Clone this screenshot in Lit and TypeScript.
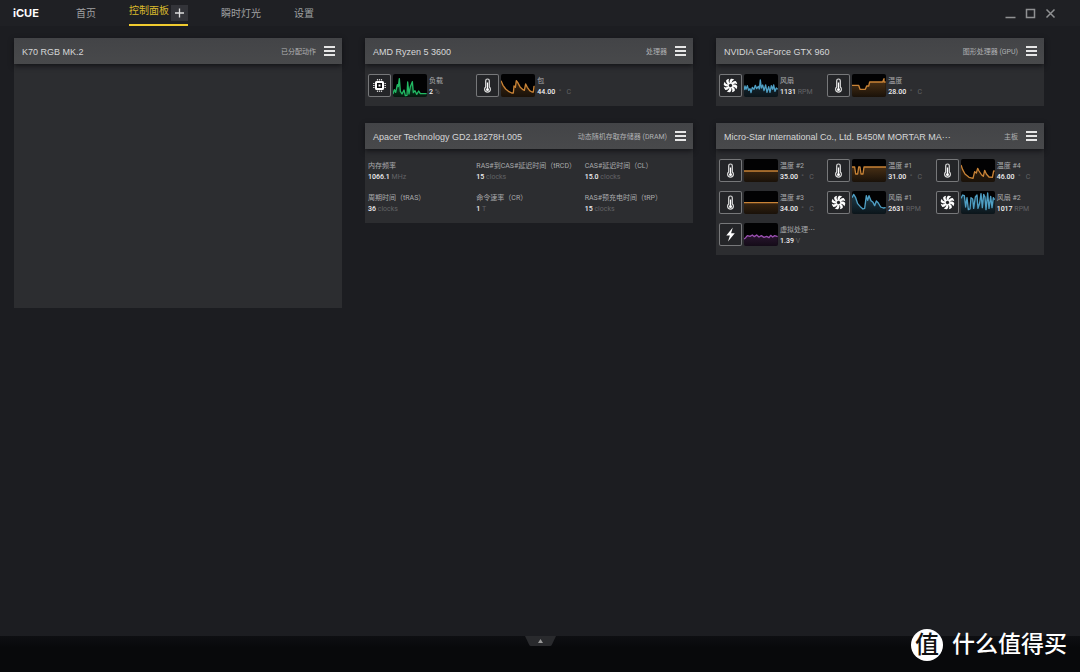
import { LitElement, html, svg, css, nothing } from "lit";
import { customElement, property } from "lit/decorators.js";

type IconName = "chip" | "temp" | "fan" | "bolt";

interface Sensor {
  icon?: IconName;
  color?: string;
  fill?: number;
  points?: string;
  label: string;
  value: string;
  unit: string;
}

interface Device {
  name: string;
  kind: string;
  sensors: Sensor[];
}

const GREEN = "#22b863";
const ORANGE = "#c98336";
const BLUE = "#4f9fc4";
const PURPLE = "#9a4fb0";

const COLUMNS: Device[][] = [
  [{ name: "K70 RGB MK.2", kind: "已分配动作", sensors: [] }],
  [
    {
      name: "AMD Ryzen 5 3600",
      kind: "处理器",
      sensors: [
        { icon: "chip", color: GREEN, fill: 0.45, label: "负载", value: "2", unit: "%",
          points: "0,60 4,47 8,55 13,32 16,38 19,14 22,52 27,60 33,48 37,65 42,64 44,24 48,60 52,38 58,23 61,56 66,50 71,61 77,51 82,59 101,59" },
        { icon: "temp", color: ORANGE, fill: 0.3, label: "包", value: "44.00", unit: " °   C",
          points: "0,20 6,34 14,45 24,53 32,57 37,57 39,36 43,40 46,20 50,25 58,40 66,47 70,49 74,30 79,40 86,50 93,54 97,54 99,37 101,37" },
      ],
    },
    {
      name: "Apacer Technology GD2.18278H.005",
      kind: "动态随机存取存储器 (DRAM)",
      sensors: [
        { label: "内存频率", value: "1066.1", unit: "MHz" },
        { label: "RAS#到CAS#延迟时间（tRCD）", value: "15", unit: "clocks" },
        { label: "CAS#延迟时间（CL）", value: "15.0", unit: "clocks" },
        { label: "周期时间（tRAS）", value: "36", unit: "clocks" },
        { label: "命令速率（CR）", value: "1", unit: "T" },
        { label: "RAS#预充电时间（tRP）", value: "15", unit: "clocks" },
      ],
    },
  ],
  [
    {
      name: "NVIDIA GeForce GTX 960",
      kind: "图形处理器 (GPU)",
      sensors: [
        { icon: "fan", color: BLUE, fill: 0.3, label: "风扇", value: "1131", unit: "RPM",
          points: "0,48 3,36 6,46 10,35 14,49 18,44 21,56 25,40 30,46 34,34 38,44 43,37 46,45 49,18 52,42 56,33 60,50 65,33 69,55 74,38 78,55 82,35 86,46 89,33 93,52 97,42 101,46" },
        { icon: "temp", color: ORANGE, fill: 0.4, label: "温度", value: "28.00", unit: " °   C",
          points: "0,34 20,34 24,46 40,46 44,36 50,36 53,24 92,24 96,14 96,24 101,24" },
      ],
    },
    {
      name: "Micro-Star International Co., Ltd. B450M MORTAR MA···",
      kind: "主板",
      sensors: [
        { icon: "temp", color: ORANGE, fill: 0.35, label: "温度 #2", value: "35.00", unit: " °   C", points: "0,36 102,36" },
        { icon: "temp", color: ORANGE, fill: 0.4, label: "温度 #1", value: "31.00", unit: " °   C",
          points: "0,24 8,24 11,45 17,45 20,24 24,24 27,45 33,45 36,24 102,24" },
        { icon: "temp", color: ORANGE, fill: 0.25, label: "温度 #4", value: "46.00", unit: " °   C",
          points: "0,18 5,32 12,45 24,55 36,58 41,38 46,42 50,28 54,36 62,48 67,52 71,34 76,45 84,54 94,55 98,36 101,36" },
        { icon: "temp", color: ORANGE, fill: 0.35, label: "温度 #3", value: "34.00", unit: " °   C", points: "0,35 102,35" },
        { icon: "fan", color: BLUE, fill: 0.35, label: "风扇 #1", value: "2631", unit: "RPM",
          points: "0,20 5,10 11,20 17,38 25,47 33,54 38,52 43,14 47,28 51,14 57,29 63,34 68,44 73,30 79,36 86,48 94,51 101,50" },
        { icon: "fan", color: BLUE, fill: 0.35, label: "风扇 #2", value: "1017", unit: "RPM",
          points: "0,22 5,12 10,14 14,48 18,20 22,56 27,54 30,20 35,24 38,52 43,18 48,12 51,52 56,36 60,8 64,50 68,10 72,18 75,56 80,6 84,52 89,16 93,50 97,20 101,26" },
        { icon: "bolt", color: PURPLE, fill: 0.35, label: "虚拟处理⋯", value: "1.39", unit: "V",
          points: "0,48 5,44 10,38 18,40 25,36 31,41 38,36 45,42 52,38 60,43 68,40 75,44 80,37 86,42 92,38 101,41" },
      ],
    },
  ],
];

const blades = [0, 45, 90, 135, 180, 225, 270, 315];

const ICONS: Record<IconName, unknown> = {
  chip: svg`
    <path d="M9.500 5v1.600M11.500 5v1.600M13.500 5v1.600M9.500 16.400v1.600M11.500 16.400v1.600M13.500 16.400v1.600M5 9.500h1.600M5 11.500h1.600M5 13.500h1.600M16.400 9.500h1.600M16.400 11.500h1.600M16.400 13.500h1.600"
      stroke="#ccc" stroke-width="1.200"/>
    <rect x="8" y="8" width="7" height="7" rx="0.500" fill="#0c0d0f" stroke="#fff" stroke-width="2"/>
    <rect x="10.500" y="10.500" width="2" height="2" fill="#fff"/>`,
  temp: svg`
    <path d="M9.700 13V6.800a1.800 1.800 0 0 1 3.600 0V13a2.900 2.900 0 1 1-3.600 0z" fill="none" stroke="#ddd" stroke-width="1.200"/>
    <path d="M11.500 8.500v6" stroke="#fff" stroke-width="1.300"/>
    <circle cx="11.500" cy="15.400" r="1.500" fill="#fff"/>`,
  fan: svg`
    ${blades.map(a => svg`<path transform=${`rotate(${a} 11.5 11.5)`} fill="#fff"
      d="M11 9.600C10.200 7.900 10.600 6 12 4.800C13.300 4.700 14.500 5.100 15.300 5.800C13.400 6.300 12.600 7.600 12.700 9.500z"/>`)}
    <circle cx="11.500" cy="11.500" r="2.200" fill="none" stroke="#fff" stroke-width="0.900"/>`,
  bolt: svg`<path d="M13.800 4.500L7.300 12.600h3.600L9 18.600l6.800-8.400h-3.700z" fill="#fff"/>`,
};

@customElement("sensor-tile")
class SensorTile extends LitElement {
  @property({ attribute: false }) sensor!: Sensor;

  static styles = css`
    :host { display: flex; gap: 2px; min-width: 0; height: 23px; }
    .icon { flex: none; width: 23px; height: 23px; border-radius: 2px; background: #242528; box-shadow: inset 0 0 0 1px #77787a; }
    .icon svg { display: block; width: 23px; height: 23px; }
    .graph { flex: none; width: 34px; height: 23px; border-radius: 2px; background: #020203; }
    .text { flex: 1; min-width: 0; font-size: 7px; line-height: 11px; white-space: nowrap; margin-top: 2px; }
    .label { color: #a9aaac; }
    .value { color: #f0f0f0; font-weight: 500; }
    .unit { color: #626366; white-space: pre; }
  `;

  render() {
    const s = this.sensor;
    return html`
      ${s.icon
        ? html`<span class="icon"><svg viewBox="0 0 23 23">${ICONS[s.icon]}</svg></span>
            <svg class="graph" viewBox="0 0 102 69" preserveAspectRatio="none">
              <defs>
                <linearGradient id="area" x1="0" y1="0" x2="0" y2="69" gradientUnits="userSpaceOnUse">
                  <stop offset="0.2" stop-color=${s.color} stop-opacity=${s.fill}/>
                  <stop offset="1" stop-color=${s.color} stop-opacity="0.12"/>
                </linearGradient>
              </defs>
              <polygon points=${`0,69 ${s.points} 102,69`} fill="url(#area)"/>
              <polyline points=${s.points} fill="none" stroke=${s.color} stroke-width="4" stroke-linejoin="round"/>
            </svg>`
        : nothing}
      <div class="text">
        <div class="label">${s.label}</div>
        <div><span class="value">${s.value}</span> <span class="unit">${s.unit}</span></div>
      </div>
    `;
  }
}

@customElement("device-card")
class DeviceCard extends LitElement {
  @property({ attribute: false }) device!: Device;

  static styles = css`
    :host { display: block; background: #2c2d30; }
    header { display: flex; align-items: center; gap: 8px; height: 26px; padding: 0 7px 0 8px; background: linear-gradient(#434447, #48494b); box-shadow: 0 2px 5px rgba(12, 13, 16, 0.8); }
    h2 { margin: 0; padding-top: 1px; font-family: "Liberation Sans", "Noto Sans CJK SC", sans-serif; font-size: 9px; line-height: 14px; font-weight: 400; color: #d6d7d8; white-space: nowrap; }
    .kind { margin-left: auto; padding-top: 1px; font-size: 7px; line-height: 12px; color: #b0b1b3; white-space: nowrap; }
    button { flex: none; width: 11px; height: 10px; padding: 0; border: 0; background: none; display: block; }
    button svg { display: block; width: 11px; height: 10px; }
    .grid { display: grid; grid-template-columns: repeat(3, minmax(0, 1fr)); row-gap: 9px; padding: 10px 0 9px 3px; }
    .empty { min-height: 244px; }
  `;

  render() {
    const d = this.device;
    return html`
      <header>
        <h2>${d.name}</h2>
        <span class="kind">${d.kind}</span>
        <button aria-label="菜单"><svg viewBox="0 0 11 10"><path d="M0 1h11M0 5h11M0 9h11" stroke="#e6e6e6" stroke-width="1.800"/></svg></button>
      </header>
      ${d.sensors.length
        ? html`<div class="grid">${d.sensors.map(s => html`<sensor-tile .sensor=${s}></sensor-tile>`)}</div>`
        : html`<div class="empty"></div>`}
    `;
  }
}

@customElement("app-root")
class AppRoot extends LitElement {
  static styles = css`
    :host { display: flex; flex-direction: column; min-height: 100vh; position: relative; background: #1c1d21; font-family: Roboto, "Noto Sans CJK SC", sans-serif; }
    .top { display: flex; align-items: center; height: 26px; padding: 0 24px 0 13px; background: #1f2024; font-family: Inter, "Noto Sans CJK SC", sans-serif; font-size: 10px; line-height: 16px; }
    .brand { width: 63px; font-size: 11px; font-weight: 700; color: #fff; }
    nav { display: flex; flex: 1; align-items: center; gap: 33px; height: 26px; }
    a { color: #9fa0a2; text-decoration: none; }
    .current { display: flex; align-items: center; gap: 2px; height: 24px; border-bottom: 2px solid #f0cb2f; }
    .current a { color: #d9b92c; padding-bottom: 5px; }
    button { padding: 0; border: 0; background: none; display: block; }
    .add { width: 17px; height: 16px; background: #333439; margin-top: 1px; }
    svg { display: block; }
    .window { display: flex; gap: 9px; }
    .board { flex: 1; display: grid; grid-template-columns: repeat(3, minmax(0, 1fr)); gap: 23px; align-items: start; padding: 12px 36px 12px 14px; }
    .column { display: flex; flex-direction: column; gap: 17px; }
    footer { display: flex; justify-content: center; align-items: flex-start; height: 36px; background: linear-gradient(#0e0f12, #08090b 12px); }
    .mark { position: absolute; right: 13px; bottom: 10px; display: flex; align-items: center; gap: 9px; color: #fff; font-size: 23px; line-height: 34px; font-weight: 500; }
    .seal { display: grid; place-items: center; width: 32px; height: 32px; border-radius: 50%; background: #fff; color: #111; font-size: 24px; line-height: 32px; font-weight: 500; }
  `;

  render() {
    return html`
      <div class="top">
        <span class="brand">iCUE</span>
        <nav>
          <a href="#home">首页</a>
          <span class="current">
            <a href="#dashboard">控制面板</a>
            <button class="add" aria-label="添加"><svg width="17" height="16" viewBox="0 0 17 16"><path d="M4 8h9M8.500 3.500v9" stroke="#ddd" stroke-width="1.300"/></svg></button>
          </span>
          <a href="#instant">瞬时灯光</a>
          <a href="#settings">设置</a>
        </nav>
        <div class="window">
          <button aria-label="最小化"><svg width="11" height="11" viewBox="0 0 11 11"><path d="M0.500 9.500h10" stroke="#909193" stroke-width="1.500"/></svg></button>
          <button aria-label="最大化"><svg width="11" height="11" viewBox="0 0 11 11"><path d="M1.500 1.500h8v8h-8z" fill="none" stroke="#909193" stroke-width="1.500"/></svg></button>
          <button aria-label="关闭"><svg width="11" height="11" viewBox="0 0 11 11"><path d="M1.500 1.500l8 8M9.500 1.500l-8 8" stroke="#909193" stroke-width="1.500"/></svg></button>
        </div>
      </div>
      <main class="board">
        ${COLUMNS.map(col => html`<div class="column">${col.map(d => html`<device-card .device=${d}></device-card>`)}</div>`)}
      </main>
      <footer>
        <button aria-label="展开"><svg width="31" height="10" viewBox="0 0 31 10"><path d="M0 0h31l-4 8.500q-0.700 1.500-2 1.500H6q-1.300 0-2-1.500z" fill="#292a2d"/><path d="M15.500 3l2.500 4h-5z" fill="#999"/></svg></button>
      </footer>
      <div class="mark"><span class="seal">值</span><span>什么值得买</span></div>
    `;
  }
}
